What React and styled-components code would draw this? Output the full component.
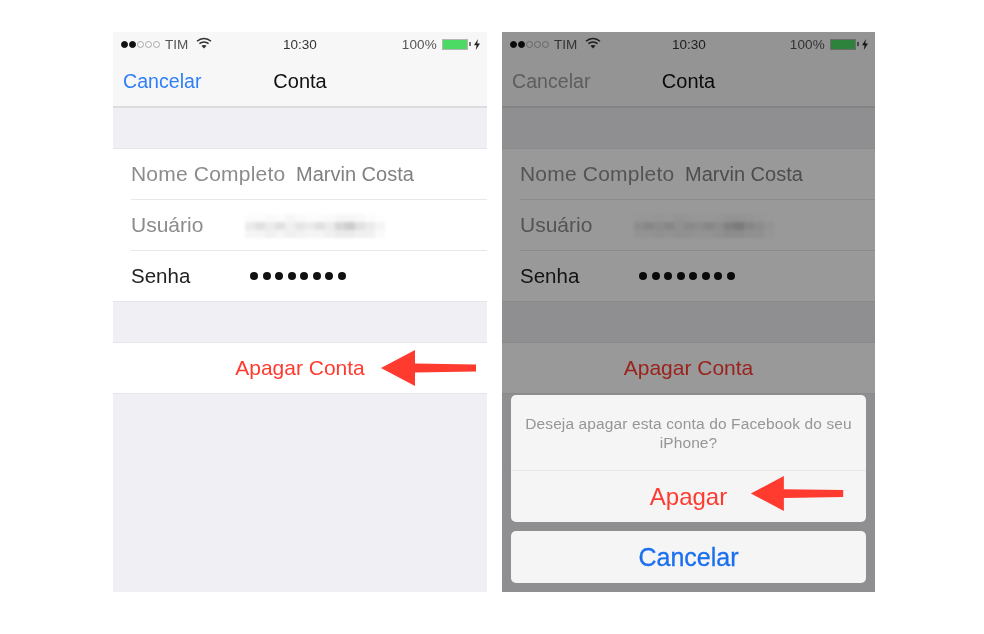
import React from 'react'
import styled, { createGlobalStyle } from 'styled-components'

const GlobalStyle = createGlobalStyle`
    html, body {
        margin: 0;
        background: #fff;
    }
    body {
        font-family: "Liberation Sans", Arial, sans-serif;
    }
`

const pixels = [
    252, 252, 250, 252, 246, 250, 252, 252, 250, 246, 246, 248, 252, 254,
    235, 225, 235, 225, 240, 230, 235, 225, 235, 215, 205, 225, 235, 245,
    245, 245, 240, 245, 240, 242, 245, 245, 240, 235, 235, 240, 240, 250,
]

function Arrow({ $small }) {
    return (
        <ArrowSvg $small={$small} viewBox="0 0 95 36">
            <polygon points="0,18 34,0 34,13.500 95,14.500 95,21.500 34,22.500 34,36" fill="#ff3b30" />
        </ArrowSvg>
    )
}

function StatusBar() {
    return (
        <Status>
            <StatusLeft>
                <Signal>
                    {[1, 1, 0, 0, 0].map((on, i) => <Dot key={i} $on={on} />)}
                </Signal>
                <Carrier>TIM</Carrier>
                <WifiIcon width="16" height="12" viewBox="0 0 16 12">
                    <path d="M1 4.2C5 .6 11 .6 15 4.2" fill="none" stroke="#333" strokeWidth="1.5" />
                    <path d="M3.4 6.6C6 4.3 10 4.3 12.6 6.6" fill="none" stroke="#333" strokeWidth="1.5" />
                    <path d="M8 11.5L5.4 8.8C6.9 7.6 9.1 7.6 10.6 8.8Z" fill="#333" />
                </WifiIcon>
            </StatusLeft>
            <Clock>10:30</Clock>
            <StatusRight>
                <Percent>100%</Percent>
                <Battery><BatteryFill /></Battery>
                <BatteryTip />
                <svg width="6" height="11" viewBox="0 0 6 11">
                    <path d="M4 0L0 6.2H2.6L1.8 11L6 4.6H3.2Z" fill="#222" />
                </svg>
            </StatusRight>
        </Status>
    )
}

function Phone({ dim, children }) {
    return (
        <Screen $width={dim ? 373 : 374}>
            <Header>
                <StatusBar />
                <Nav>
                    <NavButton $dim={dim}>Cancelar</NavButton>
                    <NavTitle>Conta</NavTitle>
                </Nav>
            </Header>
            <Group>
                <Row>
                    <Label $width={165} $spacing={0.2}>Nome Completo</Label>
                    <Value>Marvin Costa</Value>
                </Row>
                <Row>
                    <Label $width={114}>Usuário</Label>
                    <Pixelated>
                        {pixels.map((shade, i) => <Pixel key={i} $shade={shade} />)}
                    </Pixelated>
                </Row>
                <Row $last>
                    <Label $width={119} $dark>Senha</Label>
                    <Bullets>
                        {Array.from({ length: 8 }).map((_, i) => <Bullet key={i} />)}
                    </Bullets>
                </Row>
            </Group>
            <Group>
                <DeleteRow>
                    Apagar Conta
                    {!dim && <Arrow />}
                </DeleteRow>
            </Group>
            {children}
        </Screen>
    )
}

export default function App() {
    return (
        <Page>
            <GlobalStyle />
            <Phone />
            <Phone dim>
                <Overlay>
                    <Sheet>
                        <Message>Deseja apagar esta conta do Facebook do seu iPhone?</Message>
                        <SheetAction>
                            Apagar
                            <Arrow $small />
                        </SheetAction>
                    </Sheet>
                    <CancelButton>Cancelar</CancelButton>
                </Overlay>
            </Phone>
        </Page>
    )
}

const Page = styled.div`
    width: 984px;
    height: 634px;
    box-sizing: border-box;
    padding: 32px 0 0 113px;
    display: flex;
    gap: 15px;
    background: #fff;
    overflow: hidden;
    filter: blur(0.4px);
`

const Screen = styled.div`
    position: relative;
    width: ${p => p.$width}px;
    height: 560px;
    background: #efeff4;
    overflow: hidden;
`

const Header = styled.div`
    background: #f7f7f8;
    border-bottom: 2px solid #dcdcde;
    height: 74px;
`

const Status = styled.div`
    height: 24px;
    display: flex;
    align-items: center;
    justify-content: space-between;
    padding: 0 7px 0 8px;
    font-size: 13.5px;
    color: #333;
    position: relative;
`

const StatusLeft = styled.div`
    display: flex;
    align-items: center;
`

const Signal = styled.div`
    display: flex;
    gap: 1px;
    margin-right: 5px;
`

const Dot = styled.span`
    width: 7px;
    height: 7px;
    box-sizing: border-box;
    border-radius: 50%;
    background: ${p => (p.$on ? '#111' : 'transparent')};
    border: 1px solid ${p => (p.$on ? '#111' : '#aaa')};
`

const Carrier = styled.span`
    margin-right: 8px;
    color: #555;
`

const WifiIcon = styled.svg`
    margin-top: -2px;
`

const Clock = styled.span`
    position: absolute;
    left: 170px;
    font-size: 13.5px;
`

const StatusRight = styled.div`
    display: flex;
    align-items: center;
`

const Percent = styled.span`
    color: #555;
    letter-spacing: 0.2px;
    margin-right: 5px;
`

const Battery = styled.div`
    width: 26px;
    height: 11px;
    box-sizing: border-box;
    border: 1px solid #b5b5b5;
`

const BatteryFill = styled.div`
    height: 100%;
    background: #4cd964;
`

const BatteryTip = styled.div`
    width: 2px;
    height: 4px;
    background: #777;
    margin: 0 3px 0 1px;
`

const Nav = styled.div`
    position: relative;
    height: 50px;
    display: flex;
    align-items: center;
    justify-content: center;
`

const NavButton = styled.span`
    position: absolute;
    left: 10px;
    font-size: 19.6px;
    color: ${p => (p.$dim ? '#9c9c9c' : '#2f7ff7')};
`

const NavTitle = styled.span`
    font-size: 20px;
    color: #111;
`

const Group = styled.div`
    margin-top: 40px;
    background: #fff;
    border-top: 1px solid #e6e6e8;
    border-bottom: 1px solid #e6e6e8;
    padding-left: 18px;
`

const Row = styled.div`
    height: 50px;
    display: flex;
    align-items: center;
    border-bottom: ${p => (p.$last ? 'none' : '1px solid #e8e8e8')};
`

const Label = styled.span`
    width: ${p => p.$width}px;
    flex: none;
    font-size: ${p => (p.$dark ? 20.5 : 21)}px;
    letter-spacing: ${p => p.$spacing || 0}px;
    color: ${p => (p.$dark ? '#222' : '#8c8c8c')};
    white-space: nowrap;
`

const Value = styled.span`
    font-size: 20px;
    color: #808080;
`

const Pixelated = styled.div`
    width: 140px;
    margin-top: 2px;
    display: grid;
    grid-template-columns: repeat(14, 10px);
    grid-auto-rows: 8px;
    filter: blur(1.5px);
`

const Pixel = styled.span`
    background: rgb(${p => p.$shade}, ${p => p.$shade}, ${p => p.$shade});
`

const Bullets = styled.div`
    display: flex;
    gap: 4.5px;
`

const Bullet = styled.span`
    width: 8px;
    height: 8px;
    border-radius: 50%;
    background: #111;
`

const DeleteRow = styled.div`
    position: relative;
    height: 50px;
    margin-left: -18px;
    display: flex;
    align-items: center;
    justify-content: center;
    font-size: 21px;
    color: #ff3b30;
`

const ArrowSvg = styled.svg`
    position: absolute;
    width: ${p => (p.$small ? 94 : 95)}px;
    height: ${p => (p.$small ? 35 : 36)}px;
    left: ${p => (p.$small ? 239 : 268)}px;
    top: ${p => (p.$small ? 81 : 7)}px;
`

const Overlay = styled.div`
    position: absolute;
    inset: 0;
    background: rgba(0, 0, 0, 0.4);
    box-sizing: border-box;
    padding: 0 9px 9px;
    display: flex;
    flex-direction: column;
    justify-content: flex-end;
    gap: 9px;
`

const Sheet = styled.div`
    position: relative;
    height: 127px;
    background: #f5f5f5;
    border-radius: 5px;
`

const Message = styled.div`
    height: 76px;
    box-sizing: border-box;
    padding: 19px 8px 0;
    border-bottom: 1px solid #e8e8e8;
    text-align: center;
    font-size: 15.5px;
    line-height: 19px;
    letter-spacing: 0.12px;
    color: #969696;
`

const SheetAction = styled.div`
    height: 51px;
    display: flex;
    align-items: center;
    justify-content: center;
    font-size: 24px;
    color: #ff3b30;
`

const CancelButton = styled.div`
    height: 52px;
    background: #f5f5f5;
    border-radius: 5px;
    display: flex;
    align-items: center;
    justify-content: center;
    font-size: 25px;
    color: #1a6ff0;
    -webkit-text-stroke: 0.3px #1a6ff0;
`
